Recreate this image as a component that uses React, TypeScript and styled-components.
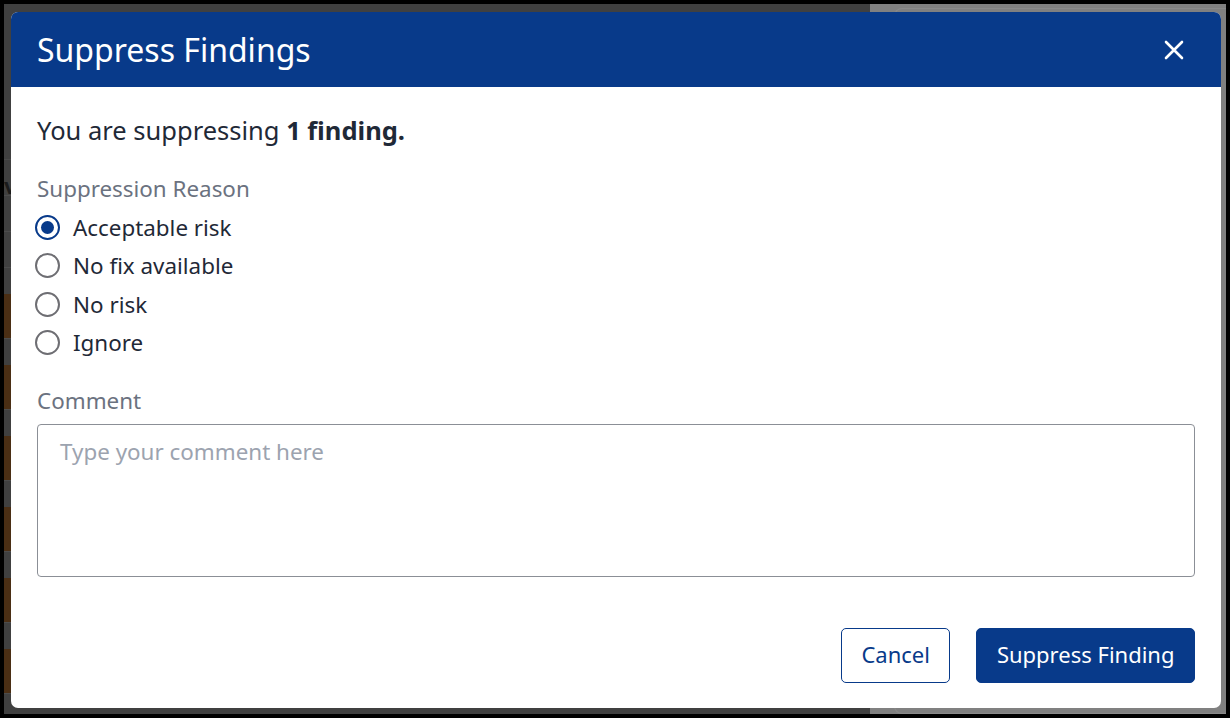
import React, { useState } from "react";
import styled, { createGlobalStyle } from "styled-components";

const BLUE = "#083a8a";

const GlobalStyle = createGlobalStyle`
  html, body {
    margin: 0;
    padding: 0;
    background: #000;
  }
  body {
    font-family: "Noto Sans", "Open Sans", sans-serif;
  }
  * {
    box-sizing: border-box;
  }
`;

const Screen = styled.div`
  position: relative;
  width: 1230px;
  height: 718px;
  padding: 4px;
  background: #000;
  overflow: hidden;
`;

const Page = styled.div`
  display: flex;
  width: 100%;
  height: 100%;
`;

const MainPane = styled.div`
  width: 866px;
  background: #404040;
  display: flex;
  flex-direction: column;
  padding-top: 88px;
`;

const PaneHeading = styled.div`
  height: 68px;
  padding-left: 8px;
  color: #0b1e3f;
  font-size: 22px;
  border-bottom: 1px solid #4a4a4a;
`;

const TableRow = styled.div<{ $highlight?: boolean }>`
  height: ${(p) => (p.$highlight ? 71 : 36)}px;
  border-bottom: 1px solid #4c4c4c;
  display: flex;
  align-items: flex-start;
  padding-top: ${(p) => (p.$highlight ? 26 : 10)}px;
  color: #1b1b1b;
  font-size: 22px;
  font-weight: 700;
`;

const SeverityCell = styled.div`
  width: 120px;
  height: 44px;
  background: #4a2e14;
  color: #6b5a48;
  font-size: 20px;
  font-weight: 400;
  padding: 8px;
`;

const SidePane = styled.div`
  flex: 1;
  background: #808080;
  padding: 4px 0 0 24px;
`;

const SideCard = styled.div`
  height: 100%;
  border: 1px solid #8a8a8a;
  border-radius: 8px 0 0 8px;
  border-right: none;
`;

const Dialog = styled.div`
  position: absolute;
  left: 11px;
  top: 12px;
  width: 1210px;
  height: 696px;
  background: #fff;
  border-radius: 7px;
  overflow: hidden;
  display: flex;
  flex-direction: column;
`;

const DialogHeader = styled.div`
  height: 75px;
  background: ${BLUE};
  display: flex;
  align-items: center;
  justify-content: space-between;
  padding: 0 36px 0 26px;
`;

const DialogTitle = styled.h2`
  margin: 0;
  color: #fff;
  font-size: 32px;
  font-weight: 400;
  line-height: 1;
`;

const CloseButton = styled.button`
  background: none;
  border: none;
  padding: 0;
  width: 22px;
  height: 22px;
  display: flex;
  align-items: center;
  justify-content: center;
  cursor: pointer;
`;

const DialogBody = styled.div`
  flex: 1;
  display: flex;
  flex-direction: column;
  padding: 27px 26px 25px;
  color: #1f2937;
`;

const Intro = styled.p`
  margin: 0;
  font-size: 25.5px;
  line-height: 32px;
  strong {
    font-weight: 700;
  }
`;

const FieldLabel = styled.div<{ $gap: number }>`
  margin-top: ${(p) => p.$gap}px;
  font-size: 22.4px;
  line-height: 28px;
  color: #6b7280;
`;

const RadioGroup = styled.div`
  margin-top: 5px;
  display: flex;
  flex-direction: column;
`;

const RadioRow = styled.label`
  height: 38.5px;
  display: flex;
  align-items: center;
  gap: 13px;
  font-size: 22.4px;
  color: #1f2937;
  cursor: pointer;
`;

const RadioCircle = styled.span<{ $checked: boolean }>`
  width: 25px;
  height: 25px;
  margin-left: -2px;
  flex-shrink: 0;
  border-radius: 50%;
  border: 2px solid ${(p) => (p.$checked ? BLUE : "#6e6e73")};
  display: flex;
  align-items: center;
  justify-content: center;
  &::after {
    content: "";
    width: 13px;
    height: 13px;
    border-radius: 50%;
    background: ${BLUE};
    display: ${(p) => (p.$checked ? "block" : "none")};
  }
`;

const HiddenInput = styled.input`
  display: none;
`;

const CommentBox = styled.textarea`
  margin-top: 9px;
  height: 153px;
  width: 100%;
  resize: none;
  border: 1px solid #8b8f96;
  border-radius: 4px;
  padding: 13px 22px;
  font-family: inherit;
  font-size: 22.4px;
  line-height: 28px;
  color: #1f2937;
  outline: none;
  &::placeholder {
    color: #9ca3af;
  }
`;

const Footer = styled.div`
  margin-top: auto;
  display: flex;
  justify-content: flex-end;
  gap: 26px;
`;

const Button = styled.button<{ $primary?: boolean }>`
  height: 55px;
  padding: 0 19.5px 3px;
  border-radius: 5px;
  border: 1px solid ${BLUE};
  background: ${(p) => (p.$primary ? BLUE : "#fff")};
  color: ${(p) => (p.$primary ? "#fff" : BLUE)};
  font-family: inherit;
  font-size: 22px;
  cursor: pointer;
`;

const reasons = ["Acceptable risk", "No fix available", "No risk", "Ignore"];

export default function App() {
  const [reason, setReason] = useState(reasons[0]);
  const [comment, setComment] = useState("");

  return (
    <>
      <GlobalStyle />
      <Screen>
        <Page>
          <MainPane>
            <PaneHeading>a</PaneHeading>
            <TableRow>ve</TableRow>
            <TableRow />
            <TableRow />
            {[0, 1, 2, 3, 4, 5].map((i) => (
              <TableRow key={i} $highlight>
                <SeverityCell>lo</SeverityCell>
              </TableRow>
            ))}
          </MainPane>
          <SidePane>
            <SideCard />
          </SidePane>
        </Page>

        <Dialog role="dialog" aria-modal="true">
          <DialogHeader>
            <DialogTitle>Suppress Findings</DialogTitle>
            <CloseButton aria-label="Close">
              <svg width="20" height="20" viewBox="0 0 20 20">
                <path
                  d="M2 2 L18 18 M18 2 L2 18"
                  stroke="#fff"
                  strokeWidth="2.6"
                  strokeLinecap="round"
                />
              </svg>
            </CloseButton>
          </DialogHeader>

          <DialogBody>
            <Intro>
              You are suppressing <strong>1 finding.</strong>
            </Intro>

            <FieldLabel $gap={29}>Suppression Reason</FieldLabel>
            <RadioGroup>
              {reasons.map((r) => (
                <RadioRow key={r}>
                  <HiddenInput
                    type="radio"
                    name="reason"
                    checked={reason === r}
                    onChange={() => setReason(r)}
                  />
                  <RadioCircle $checked={reason === r} />
                  {r}
                </RadioRow>
              ))}
            </RadioGroup>

            <FieldLabel $gap={25}>Comment</FieldLabel>
            <CommentBox
              placeholder="Type your comment here"
              value={comment}
              onChange={(e) => setComment(e.target.value)}
            />

            <Footer>
              <Button>Cancel</Button>
              <Button $primary>Suppress Finding</Button>
            </Footer>
          </DialogBody>
        </Dialog>
      </Screen>
    </>
  );
}
